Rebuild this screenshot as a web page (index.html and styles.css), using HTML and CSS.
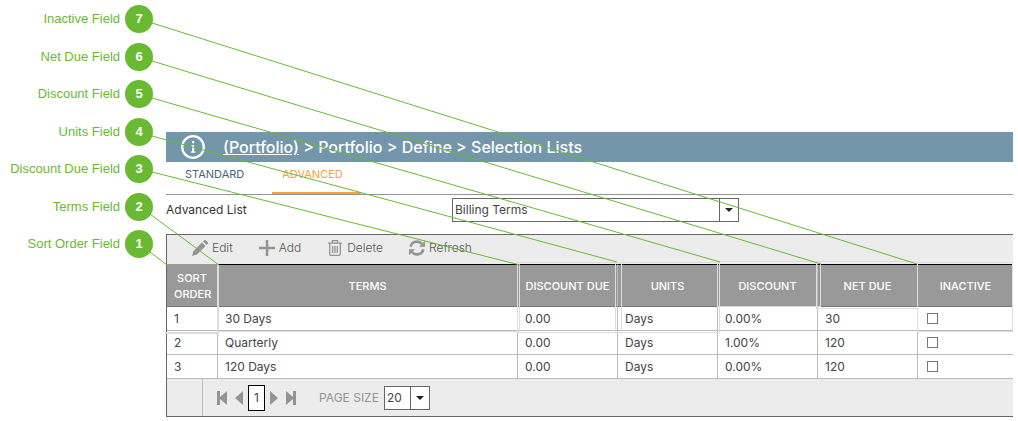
FILE: index.html
```html
<!DOCTYPE html>
<html lang="en">
  <head>
    <meta charset="UTF-8" />
    <title>Selection Lists</title>
    <link rel="stylesheet" href="styles.css">
  </head>
  <body>
    <div class="page">
      <ol class="callouts">
        <li>Inactive Field <span class="num">7</span></li>
        <li>Net Due Field <span class="num">6</span></li>
        <li>Discount Field <span class="num">5</span></li>
        <li>Units Field <span class="num">4</span></li>
        <li>Discount Due Field <span class="num">3</span></li>
        <li>Terms Field <span class="num">2</span></li>
        <li>Sort Order Field <span class="num">1</span></li>
      </ol>

      <main class="app">
        <header class="title-bar">
          <svg class="info" viewBox="0 0 24 24">
            <circle cx="12" cy="12" r="10.8" fill="none" stroke="#fff" stroke-width="2.2" />
            <path d="M10.5 10h2.700v6.500h1.300v1.300H9.700v-1.300H11v-5.200h-.500zM11 6h2.200v2.200H11z" fill="#fff" />
          </svg>
          <h1><a href="#">(Portfolio)</a> &gt; Portfolio &gt; Define &gt; Selection Lists</h1>
        </header>

        <nav class="tabs">
          <a href="#" class="tab">STANDARD</a>
          <a href="#" class="tab active">ADVANCED</a>
        </nav>

        <div class="list-row">
          <label for="list">Advanced List</label>
          <span class="combo combo-wide">
            <select id="list"><option>Billing Terms</option></select>
          </span>
        </div>

        <section class="grid">
          <div class="toolbar">
            <button type="button" class="tool">
              <svg viewBox="0 0 16 16"><path d="M0 16l1.4-5L10 2.4l3.6 3.6L5 14.6zM11 1.4l1-1a1.4 1.4 0 0 1 2 0L15.6 2a1.4 1.4 0 0 1 0 2l-1 1z" fill="#949494" /></svg>
              Edit
            </button>
            <button type="button" class="tool">
              <svg viewBox="0 0 16 16"><path d="M6.7 0h2.6v6.7H16v2.6H9.3V16H6.7V9.3H0V6.7h6.7z" fill="#949494" /></svg>
              Add
            </button>
            <button type="button" class="tool">
              <svg viewBox="0 0 16 16" fill="none" stroke="#949494"><path d="M1 3.2h14M5.5 3V.7h5V3M2.7 3.5V14q0 1.4 1.3 1.4h8q1.3 0 1.3-1.4V3.5M5.7 6v7M8 6v7M10.3 6v7" stroke-width="1.3" /></svg>
              Delete
            </button>
            <button type="button" class="tool">
              <svg viewBox="0 0 16 16"><path d="M1.6 6.8A6.5 6.5 0 0 1 13 4M14.4 9.2A6.5 6.5 0 0 1 3 12" fill="none" stroke="#949494" stroke-width="2.6" /><path d="M16 .8v6H10zM0 15.2v-6h6z" fill="#949494" /></svg>
              Refresh
            </button>
          </div>

          <table class="terms">
            <colgroup>
              <col class="col-order"><col class="col-terms"><col class="col-std"><col class="col-std"><col class="col-std"><col class="col-std"><col>
            </colgroup>
            <thead>
              <tr>
                <th>SORT ORDER</th>
                <th>TERMS</th>
                <th>DISCOUNT DUE</th>
                <th>UNITS</th>
                <th>DISCOUNT</th>
                <th>NET DUE</th>
                <th>INACTIVE</th>
              </tr>
            </thead>
            <tbody>
              <tr>
                <td>1</td><td>30 Days</td><td>0.00</td><td>Days</td><td>0.00%</td><td>30</td>
                <td><input type="checkbox" aria-label="30 Days inactive"></td>
              </tr>
              <tr>
                <td>2</td><td>Quarterly</td><td>0.00</td><td>Days</td><td>1.00%</td><td>120</td>
                <td><input type="checkbox" aria-label="Quarterly inactive"></td>
              </tr>
              <tr>
                <td>3</td><td>120 Days</td><td>0.00</td><td>Days</td><td>0.00%</td><td>120</td>
                <td><input type="checkbox" aria-label="120 Days inactive"></td>
              </tr>
            </tbody>
          </table>

          <footer class="pager">
            <div class="pager-nav">
              <button type="button" aria-label="First page"><svg class="edge" viewBox="0 0 10 14"><path d="M0 0h3v6l7-6v14L3 8v6H0z" /></svg></button>
              <button type="button" aria-label="Previous page"><svg viewBox="0 0 8 14"><path d="M8 0v14L0 7z" /></svg></button>
              <button type="button" class="current">1</button>
              <button type="button" aria-label="Next page"><svg viewBox="0 0 8 14"><path d="M0 0v14l8-7z" /></svg></button>
              <button type="button" aria-label="Last page"><svg class="edge" viewBox="0 0 10 14"><path d="M10 0H7v6L0 0v14l7-6v6h3z" /></svg></button>
            </div>
            <label for="size">PAGE SIZE</label>
            <span class="combo combo-small">
              <select id="size"><option>20</option></select>
            </span>
          </footer>
        </section>
      </main>

      <!-- callout boxes and lines -->
      <svg class="leaders" width="1018" height="421">
        <g class="boxes">
          <path d="M165 333H218V265" stroke-width="2" />
          <path d="M219 331.5H519.5V264" />
          <rect x="517.5" y="262.5" width="104" height="70" />
          <rect x="615.5" y="262.5" width="104" height="70" />
          <rect x="717.5" y="261.5" width="103" height="45" />
          <rect x="816.5" y="261.5" width="101" height="47" />
          <rect x="917.5" y="262.5" width="95" height="69" />
        </g>
        <g class="lines">
          <path d="M152 23L917 264" />
          <path d="M152 61L821 264" />
          <path d="M152 98L720 262" />
          <path d="M152 136L617 262" />
          <path d="M152 172L520 265" />
          <path d="M150 214L219 265" />
          <path d="M150 252L167 265" />
        </g>
      </svg>
    </div>
  </body>
</html>
```
FILE: styles.css
```css
body {
  margin: 0;
  background: #fff;
  color: #444;
  font: 12px/16px Inter, sans-serif;
}
.page {
  position: relative;
  display: flex;
  padding: 5px 5px 4px 0;
}
.callouts {
  display: flex;
  flex-direction: column;
  justify-content: space-between;
  width: 153px;
  height: 253px;
  margin: 0 13px 0 0;
  padding: 0;
  list-style: none;
  color: #69b933;
  font: 13px/28px "Liberation Sans", sans-serif;
}
.callouts li {
  display: flex;
  justify-content: flex-end;
  gap: 5px;
}
.num {
  width: 28px;
  border-radius: 50%;
  background: #69b933;
  color: #fff;
  font-weight: bold;
  text-align: center;
}
.app {
  flex: 1;
  padding-top: 127px;
}
.title-bar {
  display: flex;
  align-items: center;
  gap: 18px;
  height: 30px;
  padding-left: 15px;
  background: #7496ab;
  color: #fff;
}
.info {
  width: 24px;
  height: 24px;
}
h1 {
  margin: 0;
  font-size: 16px;
  font-weight: 500;
}
h1 a {
  color: #fff;
}
.tabs {
  display: flex;
  gap: 10px;
  padding-left: 9px;
  border-bottom: 1px solid #949494;
}
.tab {
  padding: 4px 18px 10px 10px;
  border-bottom: 2px solid transparent;
  color: #4a6478;
  font-size: 11px;
  text-decoration: none;
}
.tab.active {
  border-color: #f9a03c;
  color: #f9a03c;
}
.list-row {
  display: flex;
  align-items: center;
  padding: 3px 0 12px;
}
.list-row label {
  width: 286px;
  color: #333;
}
.combo {
  position: relative;
  display: flex;
  height: 24px;
  box-sizing: border-box;
  border: 1px solid #666;
  background: #fff;
}
.combo-wide {
  width: 287px;
}
.combo-small {
  width: 46px;
}
.combo select {
  width: 100%;
  padding: 0 2px;
  border: 0;
  background: none;
  color: #444;
  font: inherit;
  appearance: none;
}
.combo::before {
  content: "";
  position: absolute;
  top: 0;
  bottom: 0;
  right: 18px;
  border-left: 1px solid #666;
}
.combo::after {
  content: "";
  position: absolute;
  top: 9px;
  right: 5px;
  border: 4px solid transparent;
  border-top-color: #222;
  border-bottom: 0;
}
.grid {
  border: 1px solid #666;
  border-right: 0;
  background: #ececec;
}
.toolbar {
  display: flex;
  align-items: center;
  gap: 26px;
  height: 26px;
  padding: 0 25px 3px;
}
.tool {
  display: flex;
  align-items: center;
  gap: 4px;
  padding: 0;
  border: 0;
  background: none;
  color: #555;
  font: inherit;
  font-weight: 300;
}
.tool svg {
  width: 16px;
  height: 16px;
}
.terms {
  width: 100%;
  table-layout: fixed;
  border-collapse: separate;
  border-spacing: 0;
  background: #fff;
}
.col-order {
  width: 51px;
}
.col-terms {
  width: 300px;
}
.col-std {
  width: 100px;
}
.terms th {
  height: 41px;
  padding: 0 7px;
  border-top: 1px solid #000;
  border-bottom: 1px solid #777;
  border-right: 1px solid #bbb;
  background: #999;
  color: #fff;
  font-size: 11px;
  font-weight: 500;
}
.terms td {
  height: 23px;
  padding: 0 7px;
  border-bottom: 1px solid #bbb;
  border-right: 1px solid #bbb;
}
.terms th:first-child {
  border-top-color: #999;
}
.terms th:last-child,
.terms td:last-child {
  border-right: 0;
}
.terms input {
  display: block;
  width: 11px;
  height: 11px;
  margin: 0 2px;
  border: 1px solid #777;
  background: #fff;
  appearance: none;
}
.pager {
  display: flex;
  align-items: center;
  height: 37px;
  color: #949494;
}
.pager-nav {
  display: flex;
  align-items: center;
  gap: 8px;
  align-self: stretch;
  margin: 0 23px 0 35px;
  padding-left: 14px;
  border-left: 1px solid #bbb;
}
.pager-nav button {
  padding: 0;
  border: 0;
  background: none;
}
.pager-nav svg {
  display: block;
  width: 8px;
  height: 14px;
  fill: #949494;
}
.pager-nav .edge {
  width: 10px;
}
.pager-nav .current {
  width: 17px;
  height: 26px;
  margin: 0 -3px;
  border: 1px solid #000;
  background: #fff;
  color: #444;
  font: inherit;
}
.pager label {
  margin-right: 5px;
}
.leaders {
  position: absolute;
  top: 0;
  left: 0;
  pointer-events: none;
}
.boxes {
  fill: none;
  stroke: #ddd;
}
.lines {
  fill: none;
  stroke: #69b933;
}
```
